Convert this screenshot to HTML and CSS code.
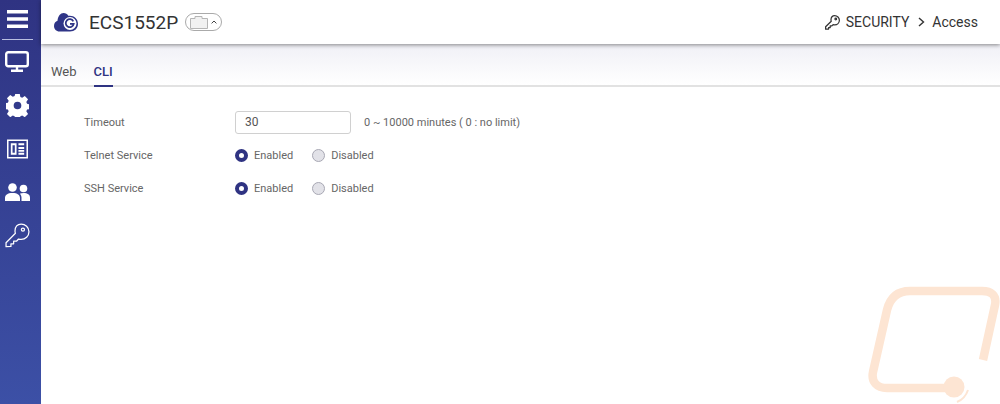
FILE: index.html
```html
<!DOCTYPE html>
<html lang="en">
<head>
  <meta charset="UTF-8">
  <title>ECS1552P</title>
  <link rel="stylesheet" href="styles.css">
</head>
<body>
  <div class="app">
    <nav class="sidebar">
      <div class="menu-btn">
        <svg width="21" height="18" viewBox="0 0 21 18"><path d="M0 0h21v3.400H0zM0 7.300h21v3.400H0zM0 14.600h21V18H0z" fill="#fff"/></svg>
      </div>
      <div class="nav-item">
        <svg width="24" height="21" viewBox="0 0 24 21" fill="none" stroke="#fff"><rect x="1.200" y="1.200" width="21.600" height="14" rx="2" stroke-width="2.400"/><path d="M12 15.500v4M6 19.800h12" stroke-width="2.400"/></svg>
      </div>
      <div class="nav-item">
        <svg width="23" height="23" viewBox="0 0 24 24"><path fill="#fff" fill-rule="evenodd" d="M9.600 0h4.800l.6 3.200 1.900.8 2.700-1.800 3.400 3.400-1.800 2.700.8 1.900 3 .6v4.800l-3 .6-.8 1.900 1.800 2.700-3.400 3.400-2.700-1.800-1.900.8-.6 3H9.600l-.6-3-1.900-.8-2.700 1.800-3.400-3.400 1.800-2.700-.8-1.900-3-.6V9.600l3-.6.8-1.900-1.800-2.700 3.400-3.400 2.700 1.800 1.900-.8zM12 8a4 4 0 1 0 0 8 4 4 0 0 0 0-8z"/></svg>
      </div>
      <div class="nav-item">
        <svg width="21" height="20" viewBox="0 0 22 20"><path fill="#fff" fill-rule="evenodd" d="M0 0h22v20H0zM1.600 1.600v16.800h18.800V1.600zM4 4h6v12H4zM5.800 6v8h2.400V6zM12 4h6v2h-6zM12 8h6v2h-6zM12 11h6v2h-6zM12 14h6v2h-6z"/></svg>
      </div>
      <div class="nav-item">
        <svg width="25" height="18" viewBox="0 0 25 18" fill="#fff"><circle cx="7.500" cy="4.500" r="4.300"/><circle cx="18.500" cy="5.500" r="3.800"/><path d="M0 18v-3c0-3 2.500-5 7.500-5s7.500 2 7.500 5v3zM16.500 18v-3.500c0-1.500-.6-3-1.700-3.800 1-.4 2.200-.7 3.700-.7 4 0 6.500 1.600 6.500 4.500V18z"/></svg>
      </div>
      <div class="nav-item">
        <svg width="25" height="25" viewBox="0 0 24 24" fill="none" stroke="#fff" stroke-width="1.200" stroke-linejoin="round"><path d="M15.500 1c4 0 7.500 3.300 7.500 7.300 0 4.300-3.500 7.500-7.500 7.500-.9 0-1.700-.2-2.500-.4l-2 2.100H8.300v2.500H5.700v2.500L1 22.700v-3.800l9-9c-.3-.8-.4-1.500-.4-2.300C9.600 3.700 11.800 1 15.500 1z"/><circle cx="17.200" cy="6.300" r="1.500"/></svg>
      </div>
    </nav>

    <div class="main">
      <header class="topbar">
        <div class="brand">
          <svg class="logo" width="24" height="20" viewBox="0 0 24 20"><path fill="#2f3587" d="M0 14c0-2.800 1.500-4.500 3.500-5.200C4 4 6.500 1 9.500 1c2.200 0 3.800 1 4.800 2.800 5.200-.8 9.700 2.700 9.700 8 0 4.800-3.500 7.700-8 7.700H5.500C2.300 19.500 0 17 0 14z"/><circle cx="16" cy="11.500" r="6.500" fill="#fff"/><path d="M19.300 9.300a4 4 0 1 0 .4 2.500h-3.700" fill="none" stroke="#2f3587" stroke-width="1.800"/></svg>
          <span class="model">ECS1552P</span>
          <span class="port-pill">
            <svg width="18" height="13" viewBox="0 0 18 13"><path d="M.5 2.500h4.500V.5h7v2h5.500v10H.5z" fill="#f1f1f1" stroke="#b5b5b5"/></svg>
            <svg width="6" height="4" viewBox="0 0 6 4"><path d="M.6 3.400 3 1l2.400 2.400" fill="none" stroke="#444" stroke-width="1"/></svg>
          </span>
        </div>
        <div class="crumbs">
          <svg width="15" height="15" viewBox="0 0 24 24" fill="none" stroke="#333" stroke-width="2" stroke-linejoin="round"><path d="M15.500 1c4 0 7.500 3.300 7.500 7.300 0 4.300-3.500 7.500-7.500 7.500-.9 0-1.700-.2-2.500-.4l-2 2.100H8.300v2.500H5.700v2.500L1 22.700v-3.800l9-9c-.3-.8-.4-1.500-.4-2.300C9.600 3.700 11.800 1 15.500 1z"/><circle cx="17.200" cy="6.300" r="1.300"/></svg>
          <span class="crumb-group">SECURITY</span>
          <svg class="crumb-sep" width="7" height="10" viewBox="0 0 7 10"><path d="M1 1l4.500 4L1 9" fill="none" stroke="#333" stroke-width="1.400"/></svg>
          <span>Access</span>
        </div>
      </header>

      <div class="tabs">
        <a class="tab">Web</a>
        <a class="tab active">CLI</a>
      </div>

      <section class="form">
        <div class="row">
          <label class="row-label">Timeout</label>
          <input class="text-input" type="text" value="30">
          <span class="hint">0 ~ 10000 minutes ( 0 : no limit)</span>
        </div>
        <div class="row">
          <label class="row-label">Telnet Service</label>
          <span class="radio checked"></span><span class="radio-text">Enabled</span>
          <span class="radio"></span><span class="radio-text">Disabled</span>
        </div>
        <div class="row">
          <label class="row-label">SSH Service</label>
          <span class="radio checked"></span><span class="radio-text">Enabled</span>
          <span class="radio"></span><span class="radio-text">Disabled</span>
        </div>
      </section>
    </div>
  </div>

  <svg class="watermark" width="140" height="134" viewBox="0 0 140 134" fill="none" stroke="#fde5d3" stroke-width="8.500">
    <path d="M123 90 L135 35 C137 25 131 21 122 21 H50 C37 21 30 28 27 40 L13 102 C11 112 17 118 27 118 H94"/>
    <circle cx="94" cy="117" r="10.500" fill="#fde5d3" stroke="none"/>
    <path d="M97 132 C102 130 106 126 108 120" stroke-width="2"/>
  </svg>
</body>
</html>
```

FILE: styles.css
```css
html, body {
  margin: 0;
  height: 100%;
  overflow: hidden;
}
body {
  font-family: Roboto, 'Liberation Sans', sans-serif;
  background: #fff;
  color: #666;
}
.app {
  display: flex;
  height: 404px;
}
.sidebar {
  width: 41px;
  flex: none;
  box-sizing: border-box;
  background: linear-gradient(to bottom, #2f3382, #3c50a6);
  display: flex;
  flex-direction: column;
  align-items: center;
  padding-right: 7px;
}
.menu-btn {
  width: 31px;
  height: 40px;
  box-sizing: border-box;
  border-bottom: 1px solid #b9bfe0;
  display: flex;
  align-items: center;
  justify-content: center;
  padding-bottom: 1px;
}
.nav-item {
  height: 43.500px;
  width: 100%;
  flex: none;
  display: flex;
  align-items: center;
  justify-content: center;
}
.main {
  flex: 1;
  min-width: 0;
}
.topbar {
  height: 44px;
  display: flex;
  align-items: center;
  justify-content: space-between;
  padding: 0 22px 0 13px;
  box-shadow: 0 1px 4px rgba(0, 0, 0, 0.45);
  position: relative;
}
.brand {
  display: flex;
  align-items: center;
}
.logo {
  margin-right: 11px;
}
.model {
  font-size: 19px;
  color: #333;
}
.port-pill {
  margin-left: 7px;
  width: 37px;
  height: 18px;
  box-sizing: border-box;
  border: 1px solid #aaa;
  border-radius: 9px;
  display: flex;
  align-items: center;
  gap: 3px;
  padding-left: 4px;
}
.crumbs {
  display: flex;
  align-items: center;
  font-size: 14px;
  color: #333;
}
.crumb-group {
  margin-left: 6px;
}
.crumb-sep {
  margin: 0 7px 0 9px;
}
.tabs {
  height: 43px;
  box-sizing: border-box;
  background: linear-gradient(to bottom, #f0f0f6, #fff);
  border-bottom: 2px solid #e2e2e2;
  display: flex;
  align-items: flex-end;
  gap: 17px;
  padding-left: 10px;
}
.tab {
  font-size: 13px;
  color: #555;
  line-height: 15px;
  padding-bottom: 6px;
  margin-bottom: -2px;
  border-bottom: 2px solid transparent;
}
.tab.active {
  color: #2f3382;
  font-weight: 500;
  border-bottom-color: #2f3382;
}
.form {
  padding: 22px 0 0 43px;
}
.row {
  display: flex;
  align-items: center;
  font-size: 11px;
  height: 33px;
}
.row:first-child {
  height: 26px;
  margin-bottom: 4px;
}
.row-label {
  width: 151px;
  flex: none;
}
.text-input {
  width: 116px;
  height: 23px;
  box-sizing: border-box;
  border: 1px solid #d0d0d0;
  border-radius: 3px;
  padding: 0 9px;
  font: 12px Roboto, sans-serif;
  color: #555;
  outline: none;
}
.hint {
  margin-left: 13px;
}
.radio {
  width: 13px;
  height: 13px;
  box-sizing: border-box;
  border: 1px solid #a8a8b4;
  border-radius: 50%;
  background: #e2e2e8;
  margin-right: 6px;
}
.radio.checked {
  border: 4px solid #2f3382;
  background: #fff;
}
.radio-text {
  margin-right: 19px;
}
.watermark {
  position: absolute;
  left: 860px;
  top: 270px;
}
```
